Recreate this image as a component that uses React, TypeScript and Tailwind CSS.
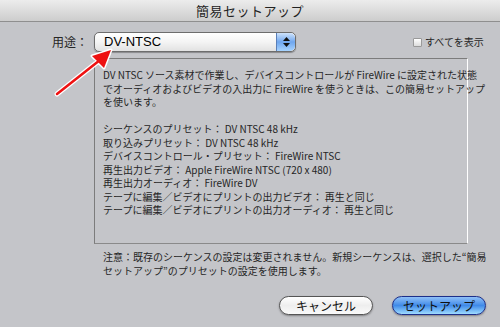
const jp = { fontFamily: '"Noto Sans CJK JP", "Liberation Sans", sans-serif' };

const boxLines = [
  "DV NTSC ソース素材で作業し、デバイスコントロールが FireWire に設定された状態",
  "でオーディオおよびビデオの入出力に FireWire を使うときは、この簡易セットアップ",
  "を使います。",
  "",
  "シーケンスのプリセット： DV NTSC 48 kHz",
  "取り込みプリセット： DV NTSC 48 kHz",
  "デバイスコントロール・プリセット： FireWire NTSC",
  "再生出力ビデオ： Apple FireWire NTSC (720 x 480)",
  "再生出力オーディオ： FireWire DV",
  "テープに編集／ビデオにプリントの出力ビデオ： 再生と同じ",
  "テープに編集／ビデオにプリントの出力オーディオ： 再生と同じ",
];

function Stepper() {
  return (
    <div className="w-[19px] h-full rounded-r-[5px] border-l border-[#5a7fb8] bg-gradient-to-b from-[#cfe3fb] via-[#6fa6ee] to-[#a8d4ff] flex flex-col items-center justify-center gap-[2px]">
      <svg width="7" height="4" viewBox="0 0 7 4">
        <polygon points="3.5,0 7,4 0,4" fill="#111" />
      </svg>
      <svg width="7" height="4" viewBox="0 0 7 4">
        <polygon points="0,0 7,0 3.5,4" fill="#111" />
      </svg>
    </div>
  );
}

export default function App() {
  return (
    <div className="relative w-[500px] h-[327px] bg-[#c4c5c9] overflow-hidden text-[#262626]" style={jp}>
      {/* title bar */}
      <div className="h-[22px] bg-gradient-to-b from-[#ececec] to-[#cdcdcd] border-b border-[#8f8f8f] flex items-center justify-center">
        <span className="text-[13px] leading-none text-[#222] tracking-[0.5px]">簡易セットアップ</span>
      </div>

      {/* preset row */}
      <div className="flex items-center mt-[10px] h-[20px]">
        <span className="ml-[52px] w-[42px] text-[12px] leading-none">用途：</span>
        <div className="w-[202px] h-[20px] flex rounded-[5px] border border-[#6d6d6d] bg-gradient-to-b from-[#ffffff] via-[#f4f4f4] to-[#e2e2e2] shadow-[0_1px_1px_rgba(0,0,0,0.3)] overflow-hidden">
          <span
            className="flex-1 pl-[9px] text-[13px] font-normal leading-[18px] text-black"
            style={{ fontFamily: '"Liberation Sans", "Noto Sans CJK JP", sans-serif' }}
          >
            DV-NTSC
          </span>
          <Stepper />
        </div>
        <div className="ml-[117px] flex items-center gap-[3px]">
          <div className="w-[9px] h-[9px] border border-[#9a9a9a] bg-gradient-to-b from-white to-[#dcdcdc] rounded-[1px]" />
          <span className="text-[10px] leading-none">すべてを表示</span>
        </div>
      </div>

      {/* description box */}
      <div className="ml-[94px] mt-[6px] w-[374px] h-[186px] border-t border-l border-[#7c7c7c] border-r border-r-white border-b border-b-[#8a8a8a] pl-[8px] pt-[9px]">
        {boxLines.map((l, i) => (
          <div key={i} className="h-[13.5px] text-[10px] leading-[13.5px] whitespace-nowrap">
            {l}
          </div>
        ))}
      </div>

      {/* note */}
      <div className="ml-[103px] mt-[6px] text-[10px] leading-[14px]">
        <div>注意：既存のシーケンスの設定は変更されません。新規シーケンスは、選択した“簡易</div>
        <div>セットアップ”のプリセットの設定を使用します。</div>
      </div>

      {/* buttons */}
      <div className="flex justify-end gap-[19px] pr-[14px] mt-[18px]">
        <button className="w-[94px] h-[19px] rounded-full border border-[#555] bg-gradient-to-b from-[#ffffff] via-[#eeeeee] to-[#fafafa] shadow-[0_1px_2px_rgba(0,0,0,0.35)] text-[12px] leading-none text-[#111]">
          キャンセル
        </button>
        <button className="w-[94px] h-[19px] rounded-full border border-[#1d2f8a] bg-gradient-to-b from-[#8fc0f7] via-[#3f8ae8] to-[#9fdcff] shadow-[0_1px_2px_rgba(0,0,0,0.35)] text-[12px] leading-none text-[#111]">
          セットアップ
        </button>
      </div>

      {/* red arrow annotation */}
      <svg className="absolute left-0 top-0 pointer-events-none" width="500" height="327" viewBox="0 0 500 327">
        <line x1="57" y1="94" x2="100" y2="60" stroke="white" strokeWidth="5" strokeLinecap="round" />
        <polygon points="111,50 92,56 104,68" fill="white" stroke="white" strokeWidth="3" strokeLinejoin="round" />
        <line x1="57" y1="94" x2="100" y2="60" stroke="#ee1111" strokeWidth="2.5" strokeLinecap="round" />
        <polygon points="111,50 92,56 104,68" fill="#ee1111" />
      </svg>
    </div>
  );
}
